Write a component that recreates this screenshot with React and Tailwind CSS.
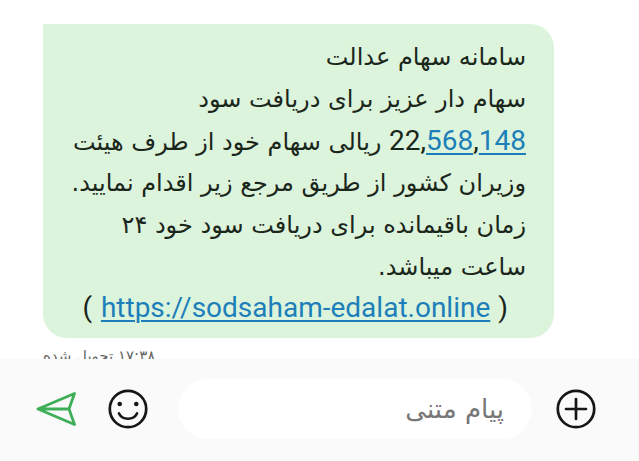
import React, { useState } from 'react'

const numberClass = 'font-[Roboto,sans-serif] text-[28px]'
const linkClass = 'font-[Roboto,sans-serif] text-[28px] text-[#1c7fb9] underline decoration-2 underline-offset-3'

const lines = [
  'سامانه سهام عدالت',
  'سهام دار عزیز برای دریافت سود',
  <>
    <span className={numberClass}>22,</span>
    <a href="#568" className={linkClass}>568</a>
    <span className={numberClass}>,</span>
    <a href="#148" className={linkClass}>148</a> ریالی سهام خود از طرف هیئت
  </>,
  'وزیران کشور از طریق مرجع زیر اقدام نمایید.',
  'زمان باقیمانده برای دریافت سود خود ۲۴',
  'ساعت میباشد.',
]

const SendIcon = () => (
  <svg className="w-10 h-9" viewBox="0 0 40 36" fill="none" stroke="#3fae58" strokeWidth={2.8} strokeLinejoin="round" strokeLinecap="round">
    <path d="M2 18 L38.5 2.5 L33 18 L38.5 33.5 Z M2 18 H33" />
  </svg>
)

const SmileIcon = () => (
  <svg className="w-10 h-10" viewBox="0 0 40 40" fill="none" stroke="#161616" strokeWidth={2.7} strokeLinecap="round">
    <circle cx="20" cy="20" r="18.2" />
    <path d="M11 24.5 C14.5 31.5 25.5 31.5 29 24.5" />
    <circle cx="11.7" cy="15" r="2.3" fill="#161616" stroke="none" />
    <circle cx="28.3" cy="15" r="2.3" fill="#161616" stroke="none" />
  </svg>
)

const PlusIcon = () => (
  <svg className="w-10 h-10" viewBox="0 0 40 40" fill="none" stroke="#161616" strokeWidth={2.7} strokeLinecap="round">
    <circle cx="20" cy="20" r="18.2" />
    <path d="M20 10 V30 M10 20 H30" />
  </svg>
)

const MessageBubble = () => (
  <div className="bg-[#dcf4dc] rounded-3xl rounded-tl-none px-7 pt-3 pb-2.5 text-2xl leading-[42px] text-[#1b261b]">
    {lines.map((line, index) => (
      <p key={index} className="h-[42px] leading-[42px] whitespace-nowrap">{line}</p>
    ))}
    <p className="leading-10 whitespace-nowrap font-[Roboto,sans-serif] text-[28px] pr-[18px]">
      ( <a href="#link" className={`${linkClass} mr-px ml-0.5`}>https://sodsaham-edalat.online</a> )
    </p>
  </div>
)

const App = () => {
  const [message, setMessage] = useState('')

  return (
    <div dir="rtl" className="h-screen flex flex-col bg-white font-['DejaVu_Sans',sans-serif]">
      <main className="flex-1 min-h-0 overflow-hidden pt-6 pr-[85px] pl-[43px]">
        <MessageBubble />
        <p className="mt-1.5 text-left text-[15px] leading-6 text-[#666666]">۱۷:۳۸ تحویل شده</p>
      </main>

      <form
        className="shrink-0 flex items-center bg-[#fafafa] pt-5 pb-[22px] pr-[43px] pl-9"
        onSubmit={(e) => e.preventDefault()}
      >
        <button type="button" aria-label="افزودن">
          <PlusIcon />
        </button>
        <input
          type="text"
          value={message}
          onChange={(e) => setMessage(e.target.value)}
          placeholder="پیام متنی"
          aria-label="پیام متنی"
          className="flex-1 min-w-0 h-[60px] mr-6 ml-[30px] px-7 rounded-full bg-white text-[26px] text-[#1b261b] placeholder:text-[#777777] outline-none"
        />
        <button type="button" aria-label="شکلک" className="ml-8">
          <SmileIcon />
        </button>
        <button type="submit" aria-label="ارسال">
          <SendIcon />
        </button>
      </form>
    </div>
  )
}

export default App
